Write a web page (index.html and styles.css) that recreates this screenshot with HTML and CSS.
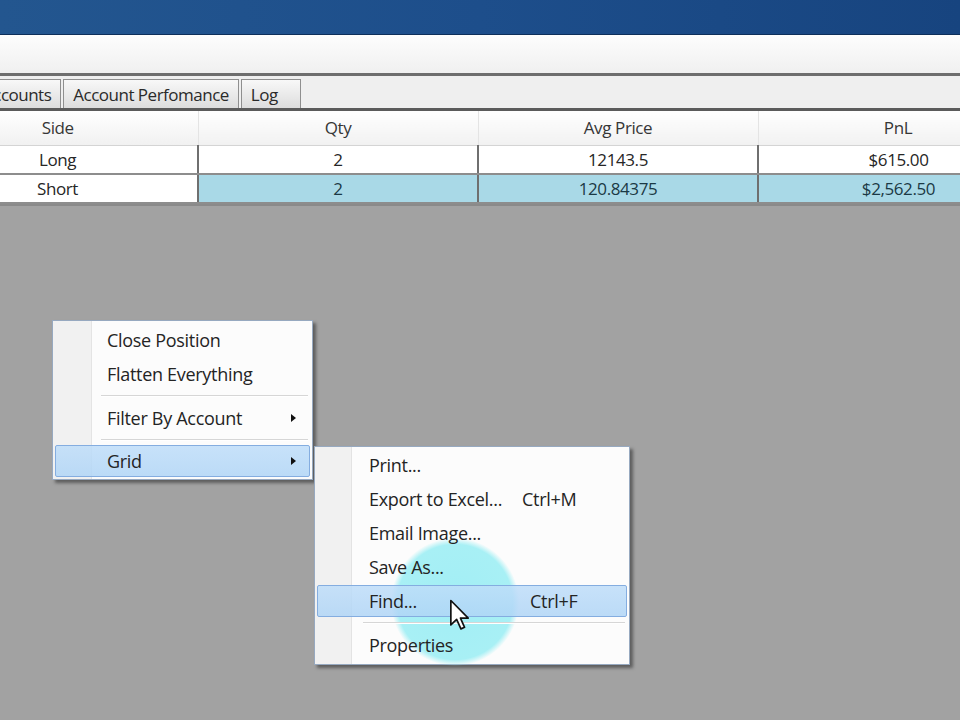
FILE: index.html
```html
<!doctype html>
<html lang="en">
  <head>
    <meta charset="UTF-8" />
    <meta name="viewport" content="width=device-width, initial-scale=1.0" />
    <title>Positions</title>
    <link rel="stylesheet" href="styles.css">
  </head>
  <body>
    <div class="title-bar"></div>
    <div class="tool-strip"></div>

    <div class="tab-strip">
      <div class="tab">Accounts</div>
      <div class="tab">Account Perfomance</div>
      <div class="tab tab-log">Log</div>
    </div>

    <div class="grid-wrap">
      <table class="grid">
        <thead>
          <tr>
            <th>Side</th>
            <th>Qty</th>
            <th>Avg Price</th>
            <th>PnL</th>
          </tr>
        </thead>
        <tbody>
          <tr>
            <td>Long</td>
            <td>2</td>
            <td>12143.5</td>
            <td>$615.00</td>
          </tr>
          <tr class="selected">
            <td>Short</td>
            <td>2</td>
            <td>120.84375</td>
            <td>$2,562.50</td>
          </tr>
        </tbody>
      </table>
    </div>

    <div class="workspace">
      <!-- right-click menu on the positions grid -->
      <div class="menu main-menu">
        <div class="menu-item">Close Position</div>
        <div class="menu-item">Flatten Everything</div>
        <div class="menu-sep"></div>
        <div class="menu-item has-sub">Filter By Account</div>
        <div class="menu-sep"></div>
        <div class="menu-item has-sub active">Grid</div>
      </div>

      <div class="menu sub-menu">
        <div class="click-spot"></div>
        <div class="menu-item">Print...</div>
        <div class="menu-item">Export to Excel... <span class="shortcut">Ctrl+M</span></div>
        <div class="menu-item">Email Image...</div>
        <div class="menu-item">Save As...</div>
        <div class="menu-item active">Find... <span class="shortcut">Ctrl+F</span></div>
        <div class="menu-sep"></div>
        <div class="menu-item">Properties</div>
      </div>

      <svg class="pointer" width="22" height="32" viewBox="0 0 14 21">
        <path d="M1 1 L1 17 L4.8 13.4 L7.6 19.6 L10 18.6 L7.3 12.5 L12.4 12.5 Z"
              fill="#fff" stroke="#111" stroke-width="1.1" stroke-linejoin="round" />
      </svg>
    </div>
  </body>
</html>
```

FILE: styles.css
```css
* {
  box-sizing: border-box;
}

html,
body {
  height: 100%;
}

body {
  margin: 0;
  display: flex;
  flex-direction: column;
  font-family: "Open Sans", "Noto Sans", sans-serif;
  color: #242424;
  background-color: #a2a2a2;
  overflow: hidden;
}

.title-bar {
  height: 35px;
  flex-shrink: 0;
  background: linear-gradient(90deg, #23568f 0%, #1d4e8b 50%, #17447f 100%);
  border-bottom: 1px solid #0e2f5a;
}

.tool-strip {
  height: 41px;
  flex-shrink: 0;
  background: linear-gradient(#fdfdfd, #f0f0f0);
  border-bottom: 3px solid #6e6e6e;
}

.tab-strip {
  display: flex;
  align-items: flex-end;
  height: 35px;
  flex-shrink: 0;
  padding-top: 3px;
  background-color: #efefef;
  border-bottom: 3px solid #5b5b5b;
}

.tab {
  height: 29px;
  padding: 0 9px;
  margin-right: 2px;
  display: flex;
  align-items: center;
  font-size: 17px;
  letter-spacing: -0.5px;
  color: #2a2a2a;
  background: linear-gradient(#f8f8f8, #dddddd);
  border: 1px solid #8f8f8f;
  border-bottom: none;
}

.tab:first-child {
  margin-left: -27px;
}

.tab-log {
  min-width: 60px;
}

.grid-wrap {
  flex-shrink: 0;
  overflow: hidden;
  background-color: #fff;
  border-bottom: 2px solid #8a8a8a;
}

.grid {
  margin-left: -82px;
  border-collapse: collapse;
  table-layout: fixed;
  width: 1120px;
  font-size: 17px;
  letter-spacing: -0.4px;
}

.grid th {
  width: 280px;
  height: 34px;
  font-weight: normal;
  color: #363636;
  background: linear-gradient(#ffffff, #f1f1f1);
  border-right: 1px solid #e4e4e4;
  border-bottom: 1px solid #d4d4d4;
}

.grid td {
  height: 29px;
  padding: 0;
  text-align: center;
  color: #262626;
  border-left: 2px solid #6f6f6f;
  border-bottom: 2px solid #8d8d8d;
}

.grid td:first-child {
  border-left: none;
}

.grid tr.selected td {
  background-color: #a9d9e7;
  color: #1b3945;
}

.grid tr.selected td:first-child {
  background-color: #fff;
  color: #262626;
}

.workspace {
  flex: 1;
  position: relative;
}

.menu {
  position: absolute;
  padding: 2px;
  background: linear-gradient(90deg, #f1f1f1 0, #f1f1f1 36px, #e3e3e3 36px, #e3e3e3 37px, #fcfcfc 37px);
  border: 1px solid #97a9c0;
  box-shadow: 3px 3px 3px rgba(40, 40, 40, 0.55);
  font-size: 18px;
  letter-spacing: -0.3px;
}

.main-menu {
  left: 52px;
  top: 114px;
  width: 261px;
  background: linear-gradient(90deg, #f1f1f1 0, #f1f1f1 38px, #e4e4e4 38px, #e4e4e4 39px, #fcfcfc 39px);
}

.sub-menu {
  left: 314px;
  top: 240px;
  width: 316px;
  padding-top: 1px;
}

.menu-item {
  position: relative;
  z-index: 1;
  height: 34px;
  display: flex;
  align-items: center;
  padding-left: 51px;
  border: 1px solid transparent;
  border-radius: 2px;
}

.menu-item.active {
  height: 32px;
  margin: 1px 0;
  background: linear-gradient(rgba(190, 221, 249, 0.85), rgba(176, 213, 246, 0.85));
  border-color: #84ade0;
}

.main-menu .menu-item.active {
  margin: 0;
}

.has-sub::after {
  content: "";
  position: absolute;
  left: 235px;
  top: 50%;
  margin-top: -4px;
  border-left: 5px solid #111;
  border-top: 4px solid transparent;
  border-bottom: 4px solid transparent;
}

.shortcut {
  position: absolute;
  left: 204px;
}

.sub-menu .active .shortcut {
  left: 212px;
}

.menu-sep {
  height: 10px;
  margin-left: 46px;
  position: relative;
}

.menu-sep::before {
  content: "";
  position: absolute;
  left: 0;
  right: 2px;
  top: 4px;
  border-top: 1px solid #d6d6d6;
  border-bottom: 1px solid #fff;
}

/* click highlight left by the screen recorder */
.click-spot {
  position: absolute;
  z-index: 0;
  left: 76px;
  top: 91px;
  width: 128px;
  height: 128px;
  border-radius: 50%;
  background: radial-gradient(closest-side, #a2eef5 0%, #a8f0f5 90%, rgba(168, 240, 245, 0) 100%);
  pointer-events: none;
}

.pointer {
  position: absolute;
  left: 449px;
  top: 393px;
  z-index: 3;
}
```
